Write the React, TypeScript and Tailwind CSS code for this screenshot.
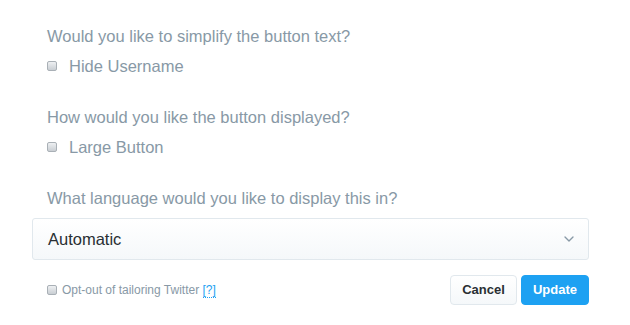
import { ChevronDown } from "lucide-react"

function Box() {
  return (
    <span className="inline-block h-[10px] w-[10px] shrink-0 rounded-[2px] border border-[#a9b0b6] bg-gradient-to-b from-[#eef0f2] to-[#c9ced3]" />
  )
}

function Option({ label }: { label: string }) {
  return (
    <label className="mt-[10px] flex items-center gap-[12px] text-[16.5px] leading-[20px] text-[#8899a6]">
      <Box />
      <span>{label}</span>
    </label>
  )
}

export default function App() {
  return (
    <div
      className="h-[325px] w-[630px] bg-white px-[32px] pt-[26px]"
      style={{ fontFamily: '"Liberation Sans", Arial, sans-serif' }}
    >
      <div className="px-[15px]">
        <p className="text-[16.5px] leading-[20px] text-[#8899a6]">
          Would you like to simplify the button text?
        </p>
        <Option label="Hide Username" />

        <p className="mt-[31px] text-[16.5px] leading-[20px] text-[#8899a6]">
          How would you like the button displayed?
        </p>
        <Option label="Large Button" />

        <p className="mt-[31px] text-[16.5px] leading-[20px] text-[#8899a6]">
          What language would you like to display this in?
        </p>
      </div>

      <div className="mt-[10px] flex h-[42px] w-[557px] items-center justify-between rounded-[3px] border border-[#e1e8ed] bg-gradient-to-b from-white to-[#f5f8fa] pl-[15px] pr-[11px]">
        <span className="text-[16.5px] text-[#292f33]">Automatic</span>
        <ChevronDown className="h-[16px] w-[16px] text-[#8899a6]" strokeWidth={2} />
      </div>

      <div className="mt-[15px] flex w-[557px] items-center justify-between">
        <label className="flex items-center gap-[5px] pl-[15px] text-[12px] text-[#8899a6]">
          <Box />
          <span>
            Opt-out of tailoring Twitter{" "}
            <span className="border-b border-dotted border-[#1da1f2] text-[#1da1f2]">[?]</span>
          </span>
        </label>
        <div className="flex gap-[4px]">
          <button className="h-[30px] w-[67px] rounded-[4px] border border-[#e1e8ed] bg-gradient-to-b from-white to-[#f5f8fa] text-[13px] font-bold text-[#292f33]">
            Cancel
          </button>
          <button className="h-[30px] w-[68px] rounded-[4px] border border-[#1da1f2] bg-[#1da1f2] text-[13px] font-bold text-white">
            Update
          </button>
        </div>
      </div>
    </div>
  )
}
